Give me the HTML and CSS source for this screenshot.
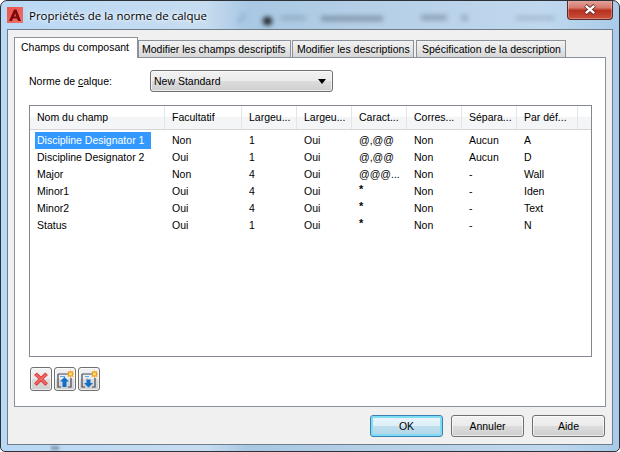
FILE: index.html
```html
<!DOCTYPE html>
<html lang="fr">
<head>
<meta charset="utf-8">
<title>Propriétés de la norme de calque</title>
<link rel="stylesheet" href="styles.css">
</head>
<body>
<div class="window">
  <div class="blur blur-a"></div>
  <div class="blur blur-b"></div>
  <div class="blur blur-c"></div>
  <div class="blur blur-d"></div>
  <div class="blur blur-e"></div>
  <div class="blur blur-f"></div>
  <div class="blur blur-g"></div>
  <div class="blur blur-h"></div>
  <header class="titlebar">
    <svg class="app-icon" width="16" height="16" viewBox="0 0 16 16">
      <defs><linearGradient id="lg" x1="0" y1="0" x2="1" y2="1"><stop offset="0" stop-color="#f0504c"/><stop offset="1" stop-color="#e8736c"/></linearGradient></defs>
      <rect width="16" height="16" fill="url(#lg)"/>
      <path d="M2 14 L7 2.5 H9.5 L14 14 H11 L10 11.5 H6 L5 14 Z" fill="#7d0b0d"/>
      <path d="M7 9.5 H9.3 L8.2 6.2 Z" fill="#e8514c"/>
    </svg>
    <span class="title">Propriétés de la norme de calque</span>
    <button class="close" aria-label="Fermer">
      <svg width="14" height="11" viewBox="0 0 14 11"><path d="M2.5 1.5 L11.5 9.5 M11.5 1.5 L2.5 9.5" stroke="#5b2320" stroke-width="3.8"/><path d="M2.8 1.8 L11.2 9.2 M11.2 1.8 L2.8 9.2" stroke="#fff" stroke-width="2.4"/></svg>
    </button>
  </header>
  <div class="client">
    <nav class="tabs">
      <div class="tab active">Champs du composant</div>
      <div class="tab t2">Modifier les champs descriptifs</div>
      <div class="tab t3">Modifier les descriptions</div>
      <div class="tab t4">Spécification de la description</div>
    </nav>
    <section class="panel">
      <div class="form-row">
        <label class="label">Norme de <u>c</u>alque:</label>
        <div class="combo"><span>New Standard</span><i class="caret"></i></div>
      </div>
      <div class="list">
        <div class="row head">
          <div>Nom du champ</div><div>Facultatif</div><div>Largeu...</div><div>Largeu...</div><div>Caract...</div><div>Corres...</div><div>Sépara...</div><div>Par déf...</div><div class="filler"></div>
        </div>
        <div class="row first">
          <div><span class="sel">Discipline Designator 1</span></div><div>Non</div><div>1</div><div>Oui</div><div>@,@@</div><div>Non</div><div>Aucun</div><div>A</div>
        </div>
        <div class="row">
          <div>Discipline Designator 2</div><div>Oui</div><div>1</div><div>Oui</div><div>@,@@</div><div>Non</div><div>Aucun</div><div>D</div>
        </div>
        <div class="row">
          <div>Major</div><div>Non</div><div>4</div><div>Oui</div><div>@@@...</div><div>Non</div><div>-</div><div>Wall</div>
        </div>
        <div class="row">
          <div>Minor1</div><div>Oui</div><div>4</div><div>Oui</div><div class="star">*</div><div>Non</div><div>-</div><div>Iden</div>
        </div>
        <div class="row">
          <div>Minor2</div><div>Oui</div><div>4</div><div>Oui</div><div class="star">*</div><div>Non</div><div>-</div><div>Text</div>
        </div>
        <div class="row">
          <div>Status</div><div>Oui</div><div>1</div><div>Oui</div><div class="star">*</div><div>Non</div><div>-</div><div>N</div>
        </div>
      </div>
      <div class="tools">
        <button class="tool" aria-label="Supprimer">
          <svg width="14" height="14" viewBox="0 0 18 18"><path d="M3.5 1.5 L9 6.5 L14.5 1.5 L17 4 L11.5 9 L17 14.5 L14.5 17 L9 11.5 L3.5 17 L1 14.5 L6.5 9 L1 4 Z" fill="#f0696a" stroke="#d8403f" stroke-width="1.3" stroke-linejoin="round"/></svg>
        </button>
        <button class="tool" aria-label="Monter">
          <svg width="18" height="18" viewBox="0 0 18 18"><path d="M2 4 H12 M2 4 V17 H5 M15 8 V17 H12" fill="none" stroke="#3c4a5c" stroke-width="1.2"/><path d="M4 6.5 H9" stroke="#5aa6e8" stroke-width="1"/><path d="M8.5 7 L13 11.5 H10.5 V17 H6.5 V11.5 H4 Z" fill="#1170c6"/><path d="M14.5 0 L15.4 1.8 L17.5 1 L16.8 3 L18 4 L16.8 5 L17.5 7 L15.4 6.3 L14.5 8 L13.6 6.3 L11.5 7 L12.2 5 L11 4 L12.2 3 L11.5 1 L13.6 1.8 Z" fill="#f59a1b"/><circle cx="14.5" cy="4" r="1.5" fill="#ffe97a"/></svg>
        </button>
        <button class="tool" aria-label="Descendre">
          <svg width="18" height="18" viewBox="0 0 18 18"><path d="M2 4 H12 M2 4 V17 H5 M15 8 V17 H12" fill="none" stroke="#3c4a5c" stroke-width="1.2"/><path d="M5 6.5 H9 M7 8 V9" stroke="#5aa6e8" stroke-width="1"/><path d="M6.5 9.5 H10.5 V13 H13 L8.5 17.5 L4 13 H6.5 Z" fill="#1170c6"/><path d="M14.5 0 L15.4 1.8 L17.5 1 L16.8 3 L18 4 L16.8 5 L17.5 7 L15.4 6.3 L14.5 8 L13.6 6.3 L11.5 7 L12.2 5 L11 4 L12.2 3 L11.5 1 L13.6 1.8 Z" fill="#f59a1b"/><circle cx="14.5" cy="4" r="1.5" fill="#ffe97a"/></svg>
        </button>
      </div>
    </section>
    <footer class="actions">
      <button class="btn default">OK</button>
      <button class="btn">Annuler</button>
      <button class="btn">Aide</button>
    </footer>
  </div>
</div>
</body>
</html>
```
FILE: styles.css
```css
* { box-sizing: border-box; }
html, body { margin: 0; padding: 0; }
body {
  width: 620px;
  height: 452px;
  overflow: hidden;
  background: #fff;
  font-family: "Liberation Sans", Arial, sans-serif;
  font-size: 10.5px;
  color: #000;
}
.window {
  position: relative;
  width: 620px;
  height: 452px;
  padding: 0 6px 6px;
  display: flex;
  flex-direction: column;
  overflow: hidden;
  border: 1px solid #2c3238;
  border-radius: 7px 7px 5px 5px;
  background: linear-gradient(90deg, #b9d8f5 0%, #c6dcf0 33%, #a9c8e3 40%, #b5cfe6 60%, #c0d8ee 88%, #a8cbe9 100%);
}
.blur { position: absolute; background: #33404e; filter: blur(2.5px); }
.blur-a { left: 262px; top: 16px; width: 9px; height: 8px; border-radius: 5px; background: #15181c; }
.blur-b { left: 280px; top: 15px; width: 25px; height: 4px; opacity: .25; }
.blur-c { left: 320px; top: 15px; width: 62px; height: 5px; opacity: .4; }
.blur-d { left: 420px; top: 14px; width: 26px; height: 5px; opacity: .35; }
.blur-e { left: 515px; top: 15px; width: 38px; height: 4px; opacity: .22; }
.blur-f { left: 238px; top: 12px; width: 5px; height: 11px; opacity: .18; background: #2a6ea8; transform: rotate(35deg); }
.blur-g { left: 460px; top: 14px; width: 7px; height: 6px; opacity: .25; }
.blur-h { left: 50px; top: 445px; width: 8px; height: 4px; opacity: .4; filter: blur(1.5px); }
.titlebar {
  position: relative;
  flex: none;
  height: 28px;
  display: flex;
  align-items: flex-start;
  gap: 6px;
}
.app-icon { margin-top: 6px; flex: none; }
.title {
  margin-top: 7px;
  font-family: "Open Sans", sans-serif;
  font-size: 11.5px;
  line-height: 16px;
  color: #000;
  text-shadow: 0 0 6px #fff, 0 0 3px #fff;
}
.close {
  position: absolute;
  right: 0;
  top: -1px;
  width: 46px;
  height: 20px;
  padding: 0;
  display: flex;
  align-items: center;
  justify-content: center;
  border: 1px solid #5b2a26;
  border-top: 0;
  border-radius: 0 0 4px 4px;
  background: linear-gradient(#e4a89e 0%, #d87a6e 40%, #b8301e 55%, #c9503c 100%);
  box-shadow: inset 0 0 0 1px rgba(255,255,255,.3);
}
.client {
  flex: 1;
  display: flex;
  flex-direction: column;
  background: #f0f0f0;
  border: 1px solid #6f7c8a;
  padding: 7px 6px 0;
  min-height: 0;
}
.tabs {
  flex: none;
  height: 20px;
  display: flex;
  align-items: flex-end;
  position: relative;
  z-index: 1;
}
.tab {
  height: 17px;
  line-height: 16px;
  border: 1px solid #8a9199;
  border-bottom: 0;
  background: linear-gradient(#f2f2f2, #e6e6e6 50%, #d6d6d6);
  white-space: nowrap;
}
.t2 { width: 153px; padding-left: 3px; }
.t3 { width: 122px; padding-left: 4px; margin-left: 1px; }
.t4 { width: 150px; padding-left: 5px; margin-left: 2px; }
.tab.active {
  height: 21px;
  width: 124px;
  margin: 0 0 -1px 0;
  background: #fff;
  padding: 0 0 0 6px;
  line-height: 18px;
}
.panel {
  flex: none;
  height: 350px;
  width: 592px;
  border: 1px solid #8a9199;
  padding: 12px 13px 0 14px;
  background: #fff;
  display: flex;
  flex-direction: column;
}
.form-row { display: flex; align-items: center; height: 22px; }
.label { width: 121px; }
.combo {
  width: 183px;
  height: 22px;
  border: 1px solid #707070;
  border-radius: 3px;
  background: linear-gradient(#f2f2f2, #ebebeb 48%, #dcdcdc 52%, #cfcfcf);
  box-shadow: inset 0 0 0 1px rgba(255,255,255,.6);
  display: flex;
  align-items: center;
  justify-content: space-between;
  padding: 0 6px 0 3px;
}
.caret {
  width: 0;
  height: 0;
  border: 4px solid transparent;
  border-top: 5px solid #000;
  border-bottom: 0;
}
.list {
  margin-top: 13px;
  height: 252px;
  border: 1px solid #828790;
  background: #fff;
  flex: none;
}
.row {
  display: grid;
  grid-template-columns: 135px 77px repeat(5, 55px) 61px 1fr;
  height: 17px;
  line-height: 17px;
  white-space: nowrap;
}
.row > div { padding-left: 7px; }
.row.first { margin-top: 2px; }
.row.head {
  height: 24px;
  line-height: 23px;
  background: linear-gradient(#fff 0, #fff 45%, #f4f5f6 50%, #f4f5f6 100%);
  border-bottom: 1px solid #d5d5d5;
}
.row.head > div { border-right: 1px solid #e4e5e6; }
.row.head > div.filler { border-right: 0; }
.row.first > div:first-child { padding-left: 5px; }
.sel {
  display: block;
  width: 116px;
  padding-left: 2px;
  background: #3399ff;
  color: #fff;
}
.row > .star { font-size: 11px; line-height: 13px; font-weight: bold; }
.tools { display: flex; gap: 2px; margin-top: 10px; padding-left: 1px; }
.tool {
  width: 22px;
  height: 24px;
  padding: 0;
  display: flex;
  align-items: center;
  justify-content: center;
  border: 1px solid #707070;
  border-radius: 3px;
  background: linear-gradient(#f2f2f2, #ebebeb 48%, #dcdcdc 52%, #cfcfcf);
  box-shadow: inset 0 0 0 1px rgba(255,255,255,.6);
}
.actions {
  flex: 1;
  display: flex;
  justify-content: flex-end;
  align-items: flex-start;
  gap: 8px;
  padding-top: 8px;
  padding-right: 1px;
}
.btn {
  width: 73px;
  height: 22px;
  padding: 0;
  font: inherit;
  color: #000;
  border: 1px solid #707070;
  border-radius: 3px;
  background: linear-gradient(#f2f2f2, #ebebeb 48%, #dcdcdc 52%, #cfcfcf);
  box-shadow: inset 0 0 0 1px rgba(255,255,255,.6);
}
.btn.default {
  border-color: #3c7fb1;
  background: linear-gradient(#ecf6fb, #dceef7 48%, #bfdfee 52%, #b0d6e8);
  box-shadow: inset 0 0 0 2px #7fdcf5;
}
```
